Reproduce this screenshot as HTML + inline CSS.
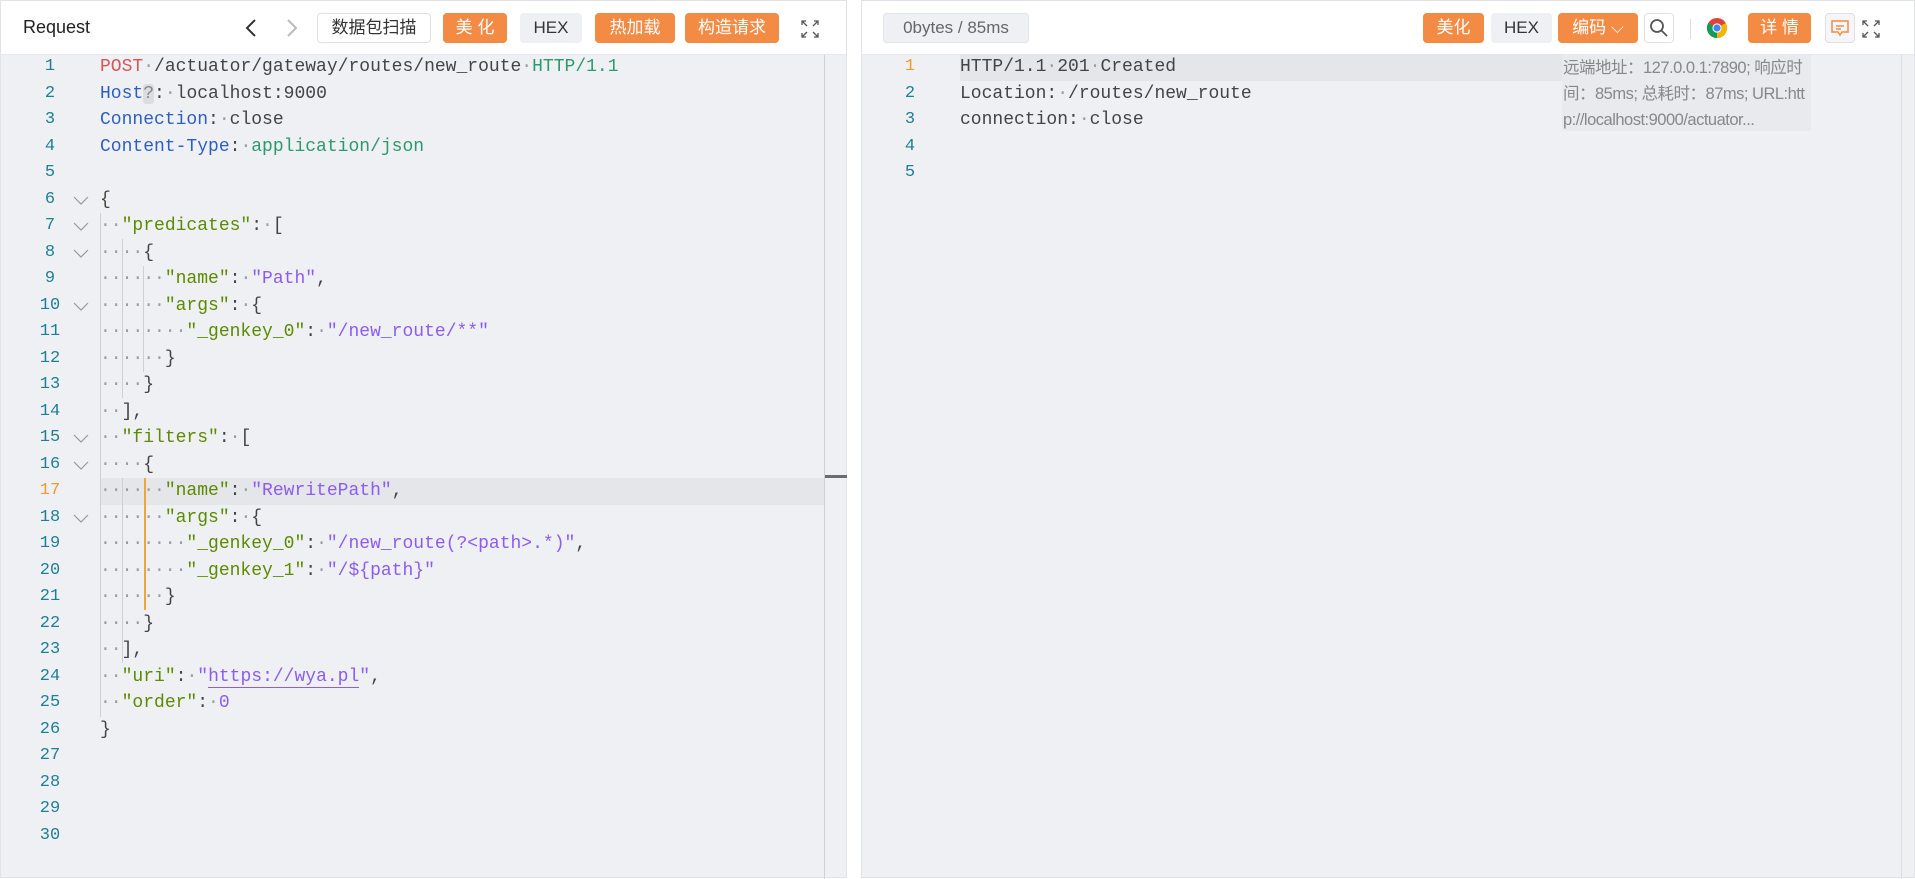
<!DOCTYPE html>
<html><head><meta charset="utf-8"><style>
*{margin:0;padding:0;box-sizing:border-box}
body{width:1915px;height:878px;background:#fff;position:relative;overflow:hidden;font-family:"Liberation Sans","Noto Sans CJK SC",sans-serif}
.panel{position:absolute;top:0;height:878px;background:#eff0f4;border:1px solid #e2e3e8}
.hdr{position:absolute;left:0;right:0;top:0;height:54px;background:#fff;border-bottom:1px solid #e8e9ee}
.b{position:absolute;top:12px;height:30px;line-height:30px;text-align:center;font-size:17px;border-radius:4px}
.o{background:#f38b45;color:#fff}
.g{background:#eff0f4;color:#333}
.w{background:#fff;border:1px solid #e0e0e4;color:#333;line-height:28px}
.code{position:absolute;font-family:"Liberation Mono",monospace;font-size:18px;white-space:pre;color:#444}
.ln{position:absolute;font-family:"Liberation Mono",monospace;font-size:17px;color:#1d7f94;text-align:center;width:30px;height:26.5px;line-height:26.5px}
.l{position:absolute;height:26.5px;line-height:26.5px}
.d{color:#9c9ca4}
.k{color:#5c8a00}.s{color:#8c5cf0}.bl{color:#2d5fc2}.r{color:#d45656}.gr{color:#2c9a6a}
.gd{position:absolute;width:1px;background:#cfd0d6}
.fold{position:absolute;left:72px;width:16px;height:9px}
</style></head><body>
<div class="panel" style="left:0;width:847px">
 <div class="hdr">
  <div style="position:absolute;left:22px;top:16px;font-size:18px;color:#222">Request</div>
  <svg style="position:absolute;left:243px;top:17px" width="14" height="20"><path d="M11 2L3 10L11 18" stroke="#333" stroke-width="2" fill="none"/></svg>
  <svg style="position:absolute;left:284px;top:17px" width="14" height="20"><path d="M3 2L11 10L3 18" stroke="#bbb" stroke-width="2" fill="none"/></svg>
  <div class="b w" style="left:316px;width:114px">数据包扫描</div>
  <div class="b o" style="left:442px;width:64px">美 化</div>
  <div class="b g" style="left:519px;width:62px">HEX</div>
  <div class="b o" style="left:594px;width:80px">热加载</div>
  <div class="b o" style="left:684px;width:94px">构造请求</div>
  <svg style="position:absolute;left:800px;top:19px" width="18" height="18" stroke="#555" stroke-width="1.3" fill="none"><path d="M1 5V1H5M1 1L6 6M13 1H17V5M17 1L12 6M1 13V17H5M1 17L6 12M17 13V17H13M17 17L12 12"/></svg>
 </div>
 <div style="position:absolute;left:99px;top:477px;width:724px;height:26.5px;background:#e5e6ea"></div>
 <div style="position:absolute;left:823px;top:54px;width:1px;height:824px;background:#cfd0d5"></div>
 <div style="position:absolute;left:824px;top:474px;width:22px;height:3px;background:#6b6c70"></div>
 <div id="lns"></div>
 <div class="gd" style="left:99px;top:212px;height:504px"></div>
 <div class="gd" style="left:121px;top:238px;height:159px"></div>
 <div class="gd" style="left:121px;top:477px;height:185px"></div>
 <div class="gd" style="left:142px;top:265px;height:106px"></div>
 <div class="gd" style="left:143px;top:477px;height:132px;background:#f0a43a;width:2px"></div>
 <div class="code" style="left:0;top:0;width:823px;height:878px">
<div class="l" style="top:53px;left:99px"><span class="r">POST</span><span class="d">·</span>/actuator/gateway/routes/new_route<span class="d">·</span><span class="gr">HTTP/1.1</span></div>
<div class="l" style="top:79.5px;left:99px"><span class="bl">Host</span><span style="background:#dcdde2;color:#888;border-radius:3px">?</span>:<span class="d">·</span>localhost:9000</div>
<div class="l" style="top:106px;left:99px"><span class="bl">Connection</span>:<span class="d">·</span>close</div>
<div class="l" style="top:132.5px;left:99px"><span class="bl">Content-Type</span>:<span class="d">·</span><span class="gr">application/json</span></div>
<div class="l" style="top:185.5px;left:99px">{</div>
<div class="l" style="top:212px;left:99px"><span class="d">··</span><span class="k">"predicates"</span>:<span class="d">·</span>[</div>
<div class="l" style="top:238.5px;left:99px"><span class="d">····</span>{</div>
<div class="l" style="top:265px;left:99px"><span class="d">······</span><span class="k">"name"</span>:<span class="d">·</span><span class="s">"Path"</span>,</div>
<div class="l" style="top:291.5px;left:99px"><span class="d">······</span><span class="k">"args"</span>:<span class="d">·</span>{</div>
<div class="l" style="top:318px;left:99px"><span class="d">········</span><span class="k">"_genkey_0"</span>:<span class="d">·</span><span class="s">"/new_route/**"</span></div>
<div class="l" style="top:344.5px;left:99px"><span class="d">······</span>}</div>
<div class="l" style="top:371px;left:99px"><span class="d">····</span>}</div>
<div class="l" style="top:397.5px;left:99px"><span class="d">··</span>],</div>
<div class="l" style="top:424px;left:99px"><span class="d">··</span><span class="k">"filters"</span>:<span class="d">·</span>[</div>
<div class="l" style="top:450.5px;left:99px"><span class="d">····</span>{</div>
<div class="l" style="top:477px;left:99px"><span class="d">······</span><span class="k">"name"</span>:<span class="d">·</span><span class="s">"RewritePath"</span>,</div>
<div class="l" style="top:503.5px;left:99px"><span class="d">······</span><span class="k">"args"</span>:<span class="d">·</span>{</div>
<div class="l" style="top:530px;left:99px"><span class="d">········</span><span class="k">"_genkey_0"</span>:<span class="d">·</span><span class="s">"/new_route(?&lt;path&gt;.*)"</span>,</div>
<div class="l" style="top:556.5px;left:99px"><span class="d">········</span><span class="k">"_genkey_1"</span>:<span class="d">·</span><span class="s">"/${path}"</span></div>
<div class="l" style="top:583px;left:99px"><span class="d">······</span>}</div>
<div class="l" style="top:609.5px;left:99px"><span class="d">····</span>}</div>
<div class="l" style="top:636px;left:99px"><span class="d">··</span>],</div>
<div class="l" style="top:662.5px;left:99px"><span class="d">··</span><span class="k">"uri"</span>:<span class="d">·</span><span class="s">"<span style="border-bottom:1px solid #8c5cf0">https://wya.pl</span>"</span>,</div>
<div class="l" style="top:689px;left:99px"><span class="d">··</span><span class="k">"order"</span>:<span class="d">·</span><span class="s">0</span></div>
<div class="l" style="top:715.5px;left:99px">}</div>
 </div>
</div>
<div class="panel" style="left:861px;width:1054px">
 <div class="hdr">
  <div class="b g" style="left:21px;width:146px;border:1px solid #e2e3e8;line-height:28px;color:#666">0bytes / 85ms</div>
  <div class="b o" style="left:561px;width:61px">美化</div>
  <div class="b g" style="left:629px;width:61px">HEX</div>
  <div class="b o" style="left:696px;width:80px">编码 ⌵</div>
  <div class="b w" style="left:782px;width:30px"><svg width="20" height="20" style="margin-top:4px" stroke="#555" stroke-width="1.8" fill="none"><circle cx="8" cy="8" r="6"/><path d="M12.5 12.5L18 18"/></svg></div>
  <div style="position:absolute;left:828px;top:18px;width:1px;height:20px;background:#ddd"></div>
  <svg style="position:absolute;left:844px;top:16px" width="22" height="22" viewBox="0 0 22 22"><circle cx="11" cy="11" r="10" fill="#db4437"/><path d="M11 11L2.3 6A10 10 0 0 0 11 21Z" fill="#0f9d58"/><path d="M11 11L11 21A10 10 0 0 0 19.7 6Z" fill="#f4b400"/><circle cx="11" cy="11" r="4.6" fill="#fff"/><circle cx="11" cy="11" r="3.6" fill="#4285f4"/></svg>
  <div class="b o" style="left:886px;width:63px">详 情</div>
  <div class="b w" style="left:963px;width:30px;background:#f6f6f8"><svg width="20" height="20" style="margin-top:4px" stroke="#f38b45" stroke-width="1.5" fill="none"><path d="M2 3H18V14H12L10 17L8 14H2Z"/><path d="M6 8H14M6 11H11"/></svg></div>
  <svg style="position:absolute;left:1000px;top:19px" width="18" height="18" stroke="#555" stroke-width="1.3" fill="none"><path d="M1 5V1H5M1 1L6 6M13 1H17V5M17 1L12 6M1 13V17H5M1 17L6 12M17 13V17H13M17 17L12 12"/></svg>
 </div>
 <div style="position:absolute;left:98px;top:53px;width:602px;height:26.5px;background:#e5e6ea"></div>
 <div style="position:absolute;left:700px;top:54px;width:249px;height:76px;background:#e9eaee;font-size:16.5px;color:#888;line-height:26px;padding-left:1px;overflow:hidden;word-break:break-all;letter-spacing:-0.5px">远端地址：127.0.0.1:7890; 响应时间：85ms; 总耗时：87ms; URL:http://localhost:9000/actuator...</div>
 <div style="position:absolute;left:1039px;top:54px;width:1px;height:824px;background:#dcdde2"></div>
 <div class="code" style="left:0;top:0">
<div class="l" style="top:53px;left:98px">HTTP/1.1<span class="d">·</span>201<span class="d">·</span>Created</div>
<div class="l" style="top:79.5px;left:98px">Location:<span class="d">·</span>/routes/new_route</div>
<div class="l" style="top:106px;left:98px">connection:<span class="d">·</span>close</div>
 </div>
 <div class="ln" style="left:33px;top:53px;color:#f09a30">1</div>
 <div class="ln" style="left:33px;top:79.5px">2</div>
 <div class="ln" style="left:33px;top:106px">3</div>
 <div class="ln" style="left:33px;top:132.5px">4</div>
 <div class="ln" style="left:33px;top:159px">5</div>
</div>
<script>
var h='';for(var i=1;i<=30;i++){h+='<div class="ln" style="left:34px;top:'+(53+(i-1)*26.5)+'px'+(i==17?';color:#f09a30':'')+'">'+i+'</div>';}
[6,7,8,10,15,16,18].forEach(function(i){h+='<svg class="fold" style="top:'+(53+(i-1)*26.5+9)+'px" viewBox="0 0 16 9"><path d="M1 1L8 8L15 1" stroke="#999" stroke-width="1.2" fill="none"/></svg>';});
document.getElementById('lns').innerHTML=h;
</script>
</body></html>
